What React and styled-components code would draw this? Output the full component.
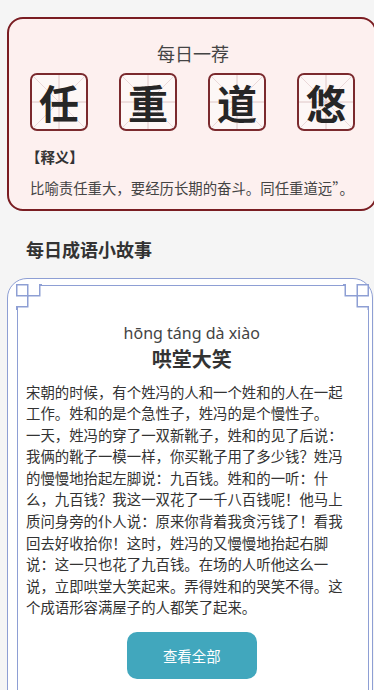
import React from "react";
import styled, { createGlobalStyle } from "styled-components";

const Global = createGlobalStyle`
  html, body {
    margin: 0;
    padding: 0;
    background: #f5f5f5;
    overflow-x: hidden;
    font-family: "Noto Sans CJK SC", "Noto Sans", sans-serif;
    color: #333;
  }
  * { box-sizing: border-box; }
`;

const Page = styled.div`
  width: 374px;
  padding-top: 17px;
`;

const DailyCard = styled.section`
  margin-left: 7px;
  width: 370px;
  border: 2.5px solid #7a1d22;
  border-radius: 16px;
  background: #fdf0ef;
  padding: 22px 19px 10px 21px;
`;

const DailyTitle = styled.div`
  text-align: center;
  font-size: 18px;
  line-height: 24px;
  color: #444;
`;

const CharRow = styled.div`
  display: grid;
  grid-template-columns: repeat(4, 58px);
  column-gap: 31px;
  margin-top: 8px;
`;

const CharBox = styled.div`
  position: relative;
  width: 58px;
  height: 58px;
  border: 2px solid #7b2a2e;
  border-radius: 7px;
  background: #fdf7f6;
  display: flex;
  align-items: center;
  justify-content: center;
  overflow: hidden;
`;

const GridLines = styled.svg`
  position: absolute;
  inset: 0;
  width: 100%;
  height: 100%;
`;

const CharText = styled.span`
  position: relative;
  font-size: 40px;
  font-weight: 700;
  line-height: 1;
  color: #262626;
`;

const MeaningLabel = styled.div`
  margin-top: 16px;
  font-size: 14.4px;
  font-weight: 700;
  line-height: 20px;
  color: #333;
  margin-left: -4px;
`;

const MeaningText = styled.div`
  margin-top: 10px;
  font-size: 14.4px;
  line-height: 22px;
  color: #444;
  white-space: nowrap;
`;

const SectionHeading = styled.h2`
  margin: 25px 0 0 26px;
  font-size: 18px;
  font-weight: 700;
  line-height: 26px;
  color: #333;
`;

const StoryCard = styled.section`
  margin: 16px 0 0 7px;
  width: 366px;
  border: 1.5px solid #8e9fd4;
  border-radius: 20px;
  background: #fff;
  padding: 5.5px 3.5px 0 8.5px;
`;

const Frame = styled.div`
  position: relative;
  border: 1.5px solid #8e9fd4;
  border-bottom: none;
  background: #fff;
  padding: 36px 10px 30px 8.5px;
`;

const Corner = styled.svg`
  position: absolute;
  top: -1.5px;
  width: 26px;
  height: 26px;
  ${(p) => (p.$right ? "right: -1.5px; transform: scaleX(-1);" : "left: -1.5px;")}
`;

const Pinyin = styled.div`
  text-align: center;
  font-family: "Noto Sans", sans-serif;
  font-size: 16px;
  line-height: 22px;
  color: #444;
`;

const StoryTitle = styled.div`
  margin-top: 2px;
  text-align: center;
  font-size: 20px;
  font-weight: 700;
  line-height: 26px;
  color: #333;
`;

const StoryBody = styled.div`
  margin-top: 9px;
  width: 320px;
  font-size: 14.4px;
  line-height: 21.6px;
  color: #333;
  p {
    margin: 0;
  }
`;

const ButtonRow = styled.div`
  display: flex;
  justify-content: center;
  margin-top: 14px;
`;

const ViewAll = styled.button`
  width: 130px;
  height: 47px;
  border: none;
  border-radius: 10px;
  background: #41a7bd;
  color: #fff;
  font-family: "Noto Sans CJK SC", sans-serif;
  font-size: 14.4px;
  cursor: pointer;
`;

const FrameCorner = ({ right }) => (
  <Corner $right={right} viewBox="0 0 26 26">
    <rect x="0" y="0" width="23" height="22" fill="#fff" />
    <rect x="0.75" y="0.75" width="11" height="11" fill="none" stroke="#8e9fd4" strokeWidth="1.5" />
    <path
      d="M26 0.75 H23.75 V11.75 H11.75 V22.75 H0.75 V26"
      fill="none"
      stroke="#8e9fd4"
      strokeWidth="1.5"
    />
  </Corner>
);

const Tian = ({ ch }) => (
  <CharBox>
    <GridLines viewBox="0 0 54 54" preserveAspectRatio="none">
      <line x1="0" y1="0" x2="54" y2="54" stroke="#ead8d8" strokeWidth="1" />
      <line x1="54" y1="0" x2="0" y2="54" stroke="#ead8d8" strokeWidth="1" />
      <line x1="27" y1="0" x2="27" y2="54" stroke="#dec6c6" strokeWidth="1" />
      <line x1="0" y1="27" x2="54" y2="27" stroke="#dec6c6" strokeWidth="1" />
    </GridLines>
    <CharText>{ch}</CharText>
  </CharBox>
);

export default function App() {
  return (
    <Page>
      <Global />
      <DailyCard>
        <DailyTitle>每日一荐</DailyTitle>
        <CharRow>
          {["任", "重", "道", "悠"].map((c) => (
            <Tian key={c} ch={c} />
          ))}
        </CharRow>
        <MeaningLabel>【释义】</MeaningLabel>
        <MeaningText>比喻责任重大，要经历长期的奋斗。同任重道远”。</MeaningText>
      </DailyCard>

      <SectionHeading>每日成语小故事</SectionHeading>

      <StoryCard>
        <Frame>
          <FrameCorner />
          <FrameCorner right />
          <Pinyin>hōng táng dà xiào</Pinyin>
          <StoryTitle>哄堂大笑</StoryTitle>
          <StoryBody>
            <p>宋朝的时候，有个姓冯的人和一个姓和的人在一起工作。姓和的是个急性子，姓冯的是个慢性子。</p>
            <p>
              一天，姓冯的穿了一双新靴子，姓和的见了后说：我俩的靴子一模一样，你买靴子用了多少钱？姓冯的慢慢地抬起左脚说：九百钱。姓和的一听：什么，九百钱？我这一双花了一千八百钱呢！他马上质问身旁的仆人说：原来你背着我贪污钱了！看我回去好收拾你！这时，姓冯的又慢慢地抬起右脚说：这一只也花了九百钱。在场的人听他这么一说，立即哄堂大笑起来。弄得姓和的哭笑不得。这个成语形容满屋子的人都笑了起来。
            </p>
          </StoryBody>
          <ButtonRow>
            <ViewAll>查看全部</ViewAll>
          </ButtonRow>
        </Frame>
      </StoryCard>
    </Page>
  );
}
